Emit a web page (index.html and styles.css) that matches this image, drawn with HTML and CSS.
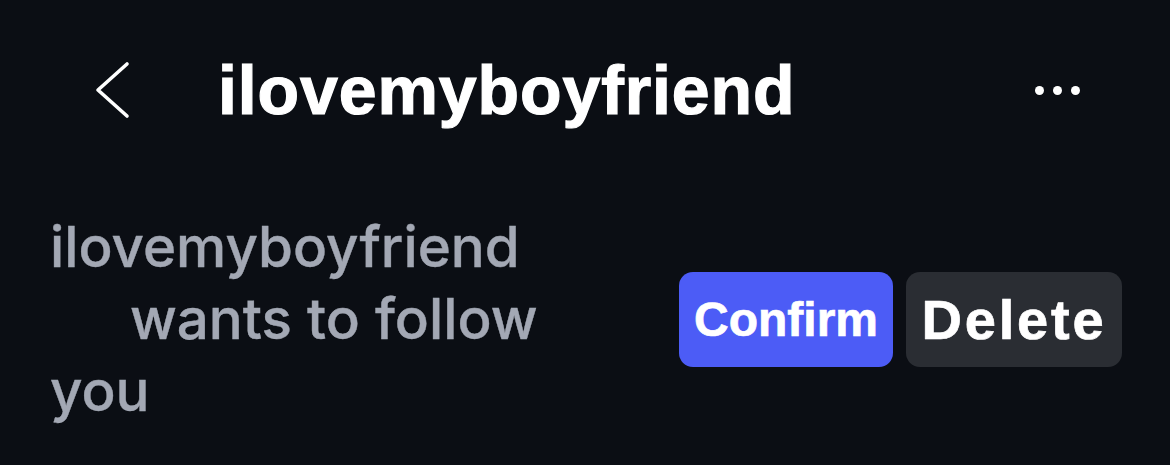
FILE: index.html
```html
<!DOCTYPE html>
<html lang="en">
<head>
	<meta charset="UTF-8">
	<title>ilovemyboyfriend</title>
	<link rel="stylesheet" href="styles.css">
</head>
<body>
	<header class="topbar">
		<a class="back" href="#">
			<svg width="40" height="60" viewBox="0 0 40 60">
				<polyline points="32,4 3,30 32,56" fill="none" stroke="#fff" stroke-width="3.6" stroke-linecap="round" stroke-linejoin="round"/>
			</svg>
		</a>
		<h1 class="title">ilovemyboyfriend</h1>
		<div class="more">
			<span></span><span></span><span></span>
		</div>
	</header>

	<section class="request">
		<div class="requestTxt">
			<div class="line">ilovemyboyfriend</div>
			<div class="line indent">wants to follow</div>
			<div class="line">you</div>
		</div>
		<div class="actions">
			<button class="btn confirm">Confirm</button>
			<button class="btn delete">Delete</button>
		</div>
	</section>
</body>
</html>
```

FILE: styles.css
```css
body{
	margin:0;
	background:#0b0e14;
	font-family:"Liberation Sans",Arial,sans-serif;
}
.topbar{
	display:flex;
	align-items:center;
	height:100px;
	margin-top:40px;
	padding:0 90px 0 95px;
}
.back{
	display:block;
	width:40px;
	height:60px;
}
.title{
	margin:0 0 0 83px;
	color:#fff;
	font-size:68px;
	font-weight:bold;
	letter-spacing:0.9px;
	-webkit-text-stroke:1.2px #fff;
	flex:1;
}
.more{
	display:flex;
	gap:9px;
}
.more span{
	width:9px;
	height:9px;
	border-radius:50%;
	background:#fff;
}
.request{
	display:flex;
	align-items:center;
	justify-content:space-between;
	padding:0 48px 0 50px;
	height:250px;
	margin-top:54px;
}
.requestTxt{
	font-family:Inter,"Liberation Sans",sans-serif;
	font-weight:500;
	color:#a3a8b4;
	font-size:56.5px;
	line-height:72px;
	-webkit-text-stroke:0.4px #a3a8b4;
}
.indent{
	padding-left:80px;
}
.actions{
	display:flex;
	gap:13px;
}
.btn{
	border:none;
	height:95px;
	border-radius:14px;
	color:#fff;
	font-family:"Liberation Sans",Arial,sans-serif;
	font-weight:bold;
	-webkit-text-stroke:0.7px #fff;
	padding:0;
	cursor:pointer;
}
.confirm{
	width:214px;
	background:#4c5cf6;
	font-size:48px;
}
.delete{
	width:216px;
	background:#2a2d33;
	font-size:56px;
	letter-spacing:2.8px;
}
```
